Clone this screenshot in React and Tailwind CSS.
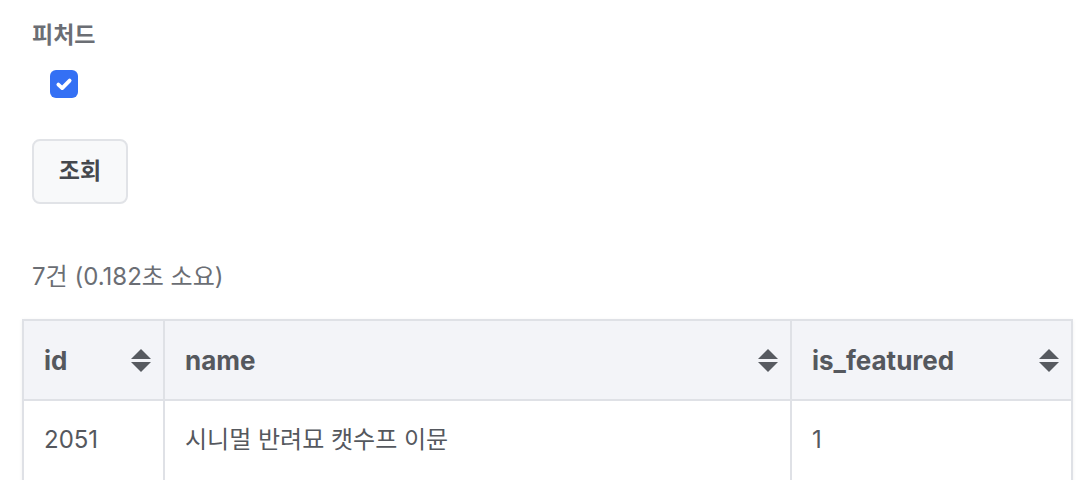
const SortIcon = () => (
  <svg width="20" height="23" viewBox="0 0 20 23" fill="#575a60">
    <polygon points="10,0 20,10 0,10" />
    <polygon points="0,13 20,13 10,23" />
  </svg>
);

const CheckIcon = () => (
  <svg width="18" height="18" viewBox="0 0 16 16" fill="none" stroke="white" strokeWidth="3.4" strokeLinecap="round" strokeLinejoin="round">
    <polyline points="3 8.5 6.4 11.6 13 5" />
  </svg>
);

const COLUMNS = [
  { key: 'id', label: 'id', w: 'w-[141px]' },
  { key: 'name', label: 'name', w: 'w-[627px]' },
  { key: 'is_featured', label: 'is_featured', w: 'w-[281px]' },
];

const ROWS = [{ id: '2051', name: '시니멀 반려묘 캣수프 이뮨', is_featured: '1' }];

export default function App() {
  return (
    <div className="min-h-screen bg-white text-[#55585e] font-['Inter','Noto_Sans_CJK_KR',sans-serif]">
      <div className="pl-[32px] pt-[19px]">
        <div className="text-[23px] leading-[32px] font-bold text-[#6b6e74]">피처드</div>
        <div className="mt-[19px] ml-[18px] w-[28px] h-[28px] rounded-[6px] bg-[#3470f4] flex items-center justify-center">
          <CheckIcon />
        </div>
        <button className="mt-[41px] w-[96px] h-[65px] rounded-[8px] border-2 border-[#e1e3e7] bg-[#f8f9fa] text-[23px] font-bold text-[#45484d]">
          조회
        </button>
        <div className="mt-[57px] text-[24px] leading-[32px] text-[#6b6e74]">7건 (0.182초 소요)</div>
      </div>
      <div className="ml-[22px] mt-[26px] w-[1049px]">
        <table className="border-collapse table-fixed w-full shadow-[0_1px_4px_rgba(0,0,0,0.06)]">
          <thead>
            <tr className="bg-[#f3f4f8]">
              {COLUMNS.map((c) => (
                <th key={c.key} className={`${c.w} h-[80px] border-2 border-[#dfe1e6] px-[12px] pl-[20px] text-left`}>
                  <div className="flex items-center justify-between">
                    <span className="text-[26px] font-bold text-[#55585e]">{c.label}</span>
                    <SortIcon />
                  </div>
                </th>
              ))}
            </tr>
          </thead>
          <tbody>
            {ROWS.map((r) => (
              <tr key={r.id}>
                {COLUMNS.map((c) => (
                  <td key={c.key} className="h-[84px] border-2 border-[#dfe1e6] pl-[20px] pb-[4px] text-[24px] text-[#55585e]">
                    {r[c.key]}
                  </td>
                ))}
              </tr>
            ))}
          </tbody>
        </table>
      </div>
    </div>
  );
}
